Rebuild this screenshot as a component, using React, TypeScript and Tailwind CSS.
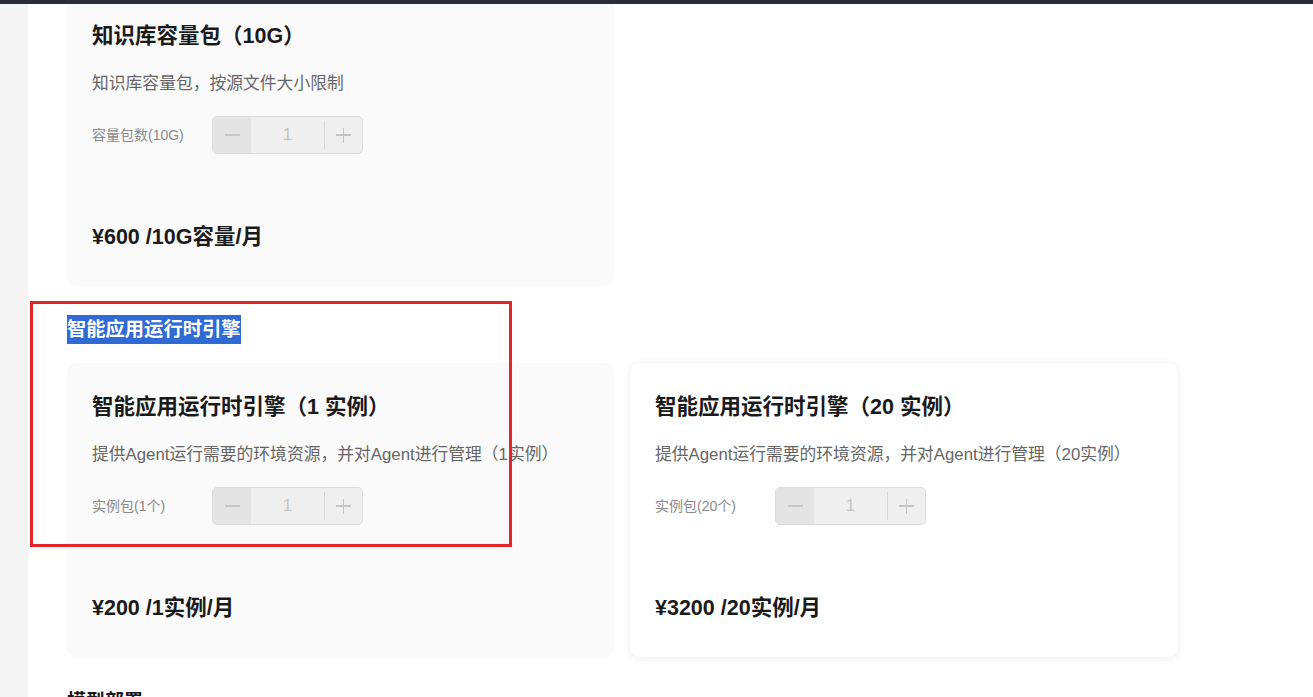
import React from "react";

const FONT = { fontFamily: '"Liberation Sans", Arial, "Noto Sans CJK SC", sans-serif' };

function Stepper() {
  return (
    <div className="flex h-[38px] w-[151px] items-stretch overflow-hidden rounded-[5px] border border-[#dcdcdc] bg-[#efefef]">
      <div className="flex w-[38px] items-center justify-center bg-[#e4e4e4]">
        <div className="h-[1.5px] w-[15px] bg-[#c8c8c8]" />
      </div>
      <div className="flex flex-1 items-center justify-center text-[17px] text-[#c4c4c4]">1</div>
      <div className="my-[4px] w-px bg-[#d6d6d6]" />
      <div className="relative flex w-[37px] items-center justify-center">
        <div className="h-[1.5px] w-[15px] bg-[#c4c4c4]" />
        <div className="absolute h-[15px] w-[1.5px] bg-[#c4c4c4]" />
      </div>
    </div>
  );
}

function Card({
  title,
  desc,
  label,
  price,
  white,
  className = "",
}: {
  title: string;
  desc: string;
  label: string;
  price: string;
  white?: boolean;
  className?: string;
}) {
  return (
    <div
      className={
        "flex h-[294px] flex-col rounded-[10px] pl-[25px] pr-[20px] pt-[30px] " +
        (white ? "bg-white shadow-[0_1px_10px_rgba(0,0,0,0.08)] " : "bg-[#fafafa] ") +
        className
      }
    >
      <div className="text-[21.5px] font-bold leading-[28px] text-[#1a1a1a]">{title}</div>
      <div className="mt-[22px] text-[16.8px] leading-[24px] text-[#666666]">{desc}</div>
      <div className="mt-[20px] flex items-center">
        <div className="w-[120px] text-[14px] text-[#8a8a8a]">{label}</div>
        <Stepper />
      </div>
      <div className="mt-[69px] text-[21.5px] font-bold leading-[28px] text-[#1a1a1a]">{price}</div>
    </div>
  );
}

export default function App() {
  return (
    <div className="relative flex h-[697px] w-[1313px] flex-col overflow-hidden bg-white" style={FONT}>
      <div className="h-[4px] w-full shrink-0 bg-[#2a2d38]" />
      <div className="flex flex-1 overflow-hidden">
        <div className="w-[28px] shrink-0 bg-[#f5f5f5]" />
        <div className="flex-1 bg-white pl-[39px]">
          <div className="grid grid-cols-[547px_548px] gap-x-[16px]">
            <Card
              className="-mt-[12px]"
              title="知识库容量包（10G）"
              desc="知识库容量包，按源文件大小限制"
              label="容量包数(10G)"
              price="¥600 /10G容量/月"
            />
          </div>
          <div className="mt-[29px] flex">
            <span className="bg-[#2f6ad5] text-[19.3px] font-bold leading-[29px] text-white">智能应用运行时引擎</span>
          </div>
          <div className="mt-[19px] grid grid-cols-[547px_548px] gap-x-[16px]">
            <Card
              title="智能应用运行时引擎（1 实例）"
              desc="提供Agent运行需要的环境资源，并对Agent进行管理（1实例）"
              label="实例包(1个)"
              price="¥200 /1实例/月"
            />
            <Card
              white
              title="智能应用运行时引擎（20 实例）"
              desc="提供Agent运行需要的环境资源，并对Agent进行管理（20实例）"
              label="实例包(20个)"
              price="¥3200 /20实例/月"
            />
          </div>
          <div className="mt-[30px] text-[19px] font-bold leading-[29px] text-[#1a1a1a]">模型部署</div>
        </div>
      </div>
      <div className="pointer-events-none absolute left-[30px] top-[301px] h-[246px] w-[482px] border-[3px] border-[#e3242b]" />
    </div>
  );
}
